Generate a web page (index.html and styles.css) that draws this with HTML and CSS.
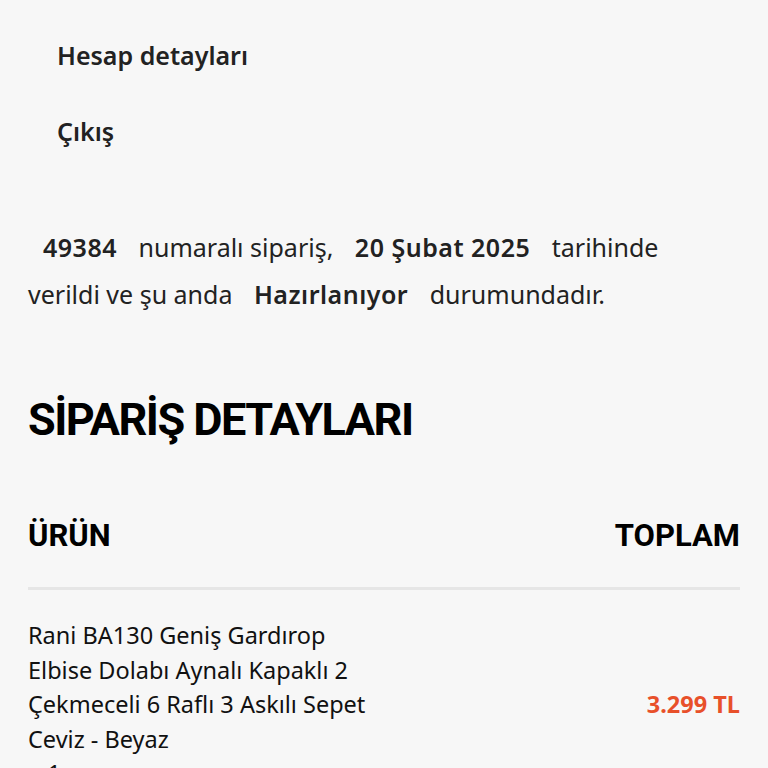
FILE: index.html
```html
<!DOCTYPE html>
<html lang="tr">
<head>
<meta charset="utf-8">
<link rel="stylesheet" href="styles.css">
</head>
<body>
<div class="page">
  <ul class="account-nav">
    <li><a href="#">Hesap detayları</a></li>
    <li><a href="#">Çıkış</a></li>
  </ul>
  <p class="order-info"><mark>49384</mark> numaralı sipariş, <mark>20 Şubat 2025</mark> tarihinde verildi ve şu anda <mark>Hazırlanıyor</mark> durumundadır.</p>
  <h2 class="section-title">SİPARİŞ DETAYLARI</h2>
  <div class="table-head">
    <span>ÜRÜN</span>
    <span>TOPLAM</span>
  </div>
  <div class="item-row">
    <div class="item-name">Rani BA130 Geniş Gardırop Elbise Dolabı Aynalı Kapaklı 2 Çekmeceli 6 Raflı 3 Askılı Sepet Ceviz - Beyaz<br><span class="qty">× 1</span></div>
    <div class="item-price">3.299 TL</div>
  </div>
</div>
</body>
</html>
```
FILE: styles.css
```css
html, body {
  margin: 0;
  padding: 0;
  background: #f7f7f7;
}
body {
  font-family: "Noto Sans", sans-serif;
  color: #222;
}
.page {
  padding: 0 28px;
}
.account-nav {
  list-style: none;
  margin: 0;
  padding: 40px 0 0 29px;
}
.account-nav li {
  height: 76px;
  line-height: 30px;
}
.account-nav a {
  font-size: 25px;
  font-weight: 600;
  color: #222;
  text-decoration: none;
}
.order-info {
  margin: 32px 0 0;
  padding-right: 36px;
  font-size: 25px;
  line-height: 47px;
  color: #222;
}
.order-info mark {
  background: transparent;
  color: #222;
  font-weight: 600;
  letter-spacing: 0.5px;
  margin: 0 15px;
}
.section-title {
  margin: 77px 0 0;
  font-family: Roboto, "Liberation Sans", sans-serif;
  font-size: 45px;
  font-weight: 700;
  letter-spacing: -1.5px;
  color: #000;
  line-height: 50px;
}
.table-head {
  display: flex;
  justify-content: space-between;
  margin-top: 73px;
  padding-bottom: 33px;
  border-bottom: 3px solid #e6e6e6;
  font-family: Roboto, "Liberation Sans", sans-serif;
  font-size: 31px;
  font-weight: 700;
  color: #000;
  line-height: 36px;
}
.item-row {
  display: flex;
  justify-content: space-between;
  align-items: center;
  padding-top: 28px;
}
.item-name {
  width: 345px;
  font-size: 23.5px;
  line-height: 34.5px;
  color: #111;
}
.item-price {
  font-size: 23.5px;
  font-weight: 700;
  color: #e8502a;
}
```
